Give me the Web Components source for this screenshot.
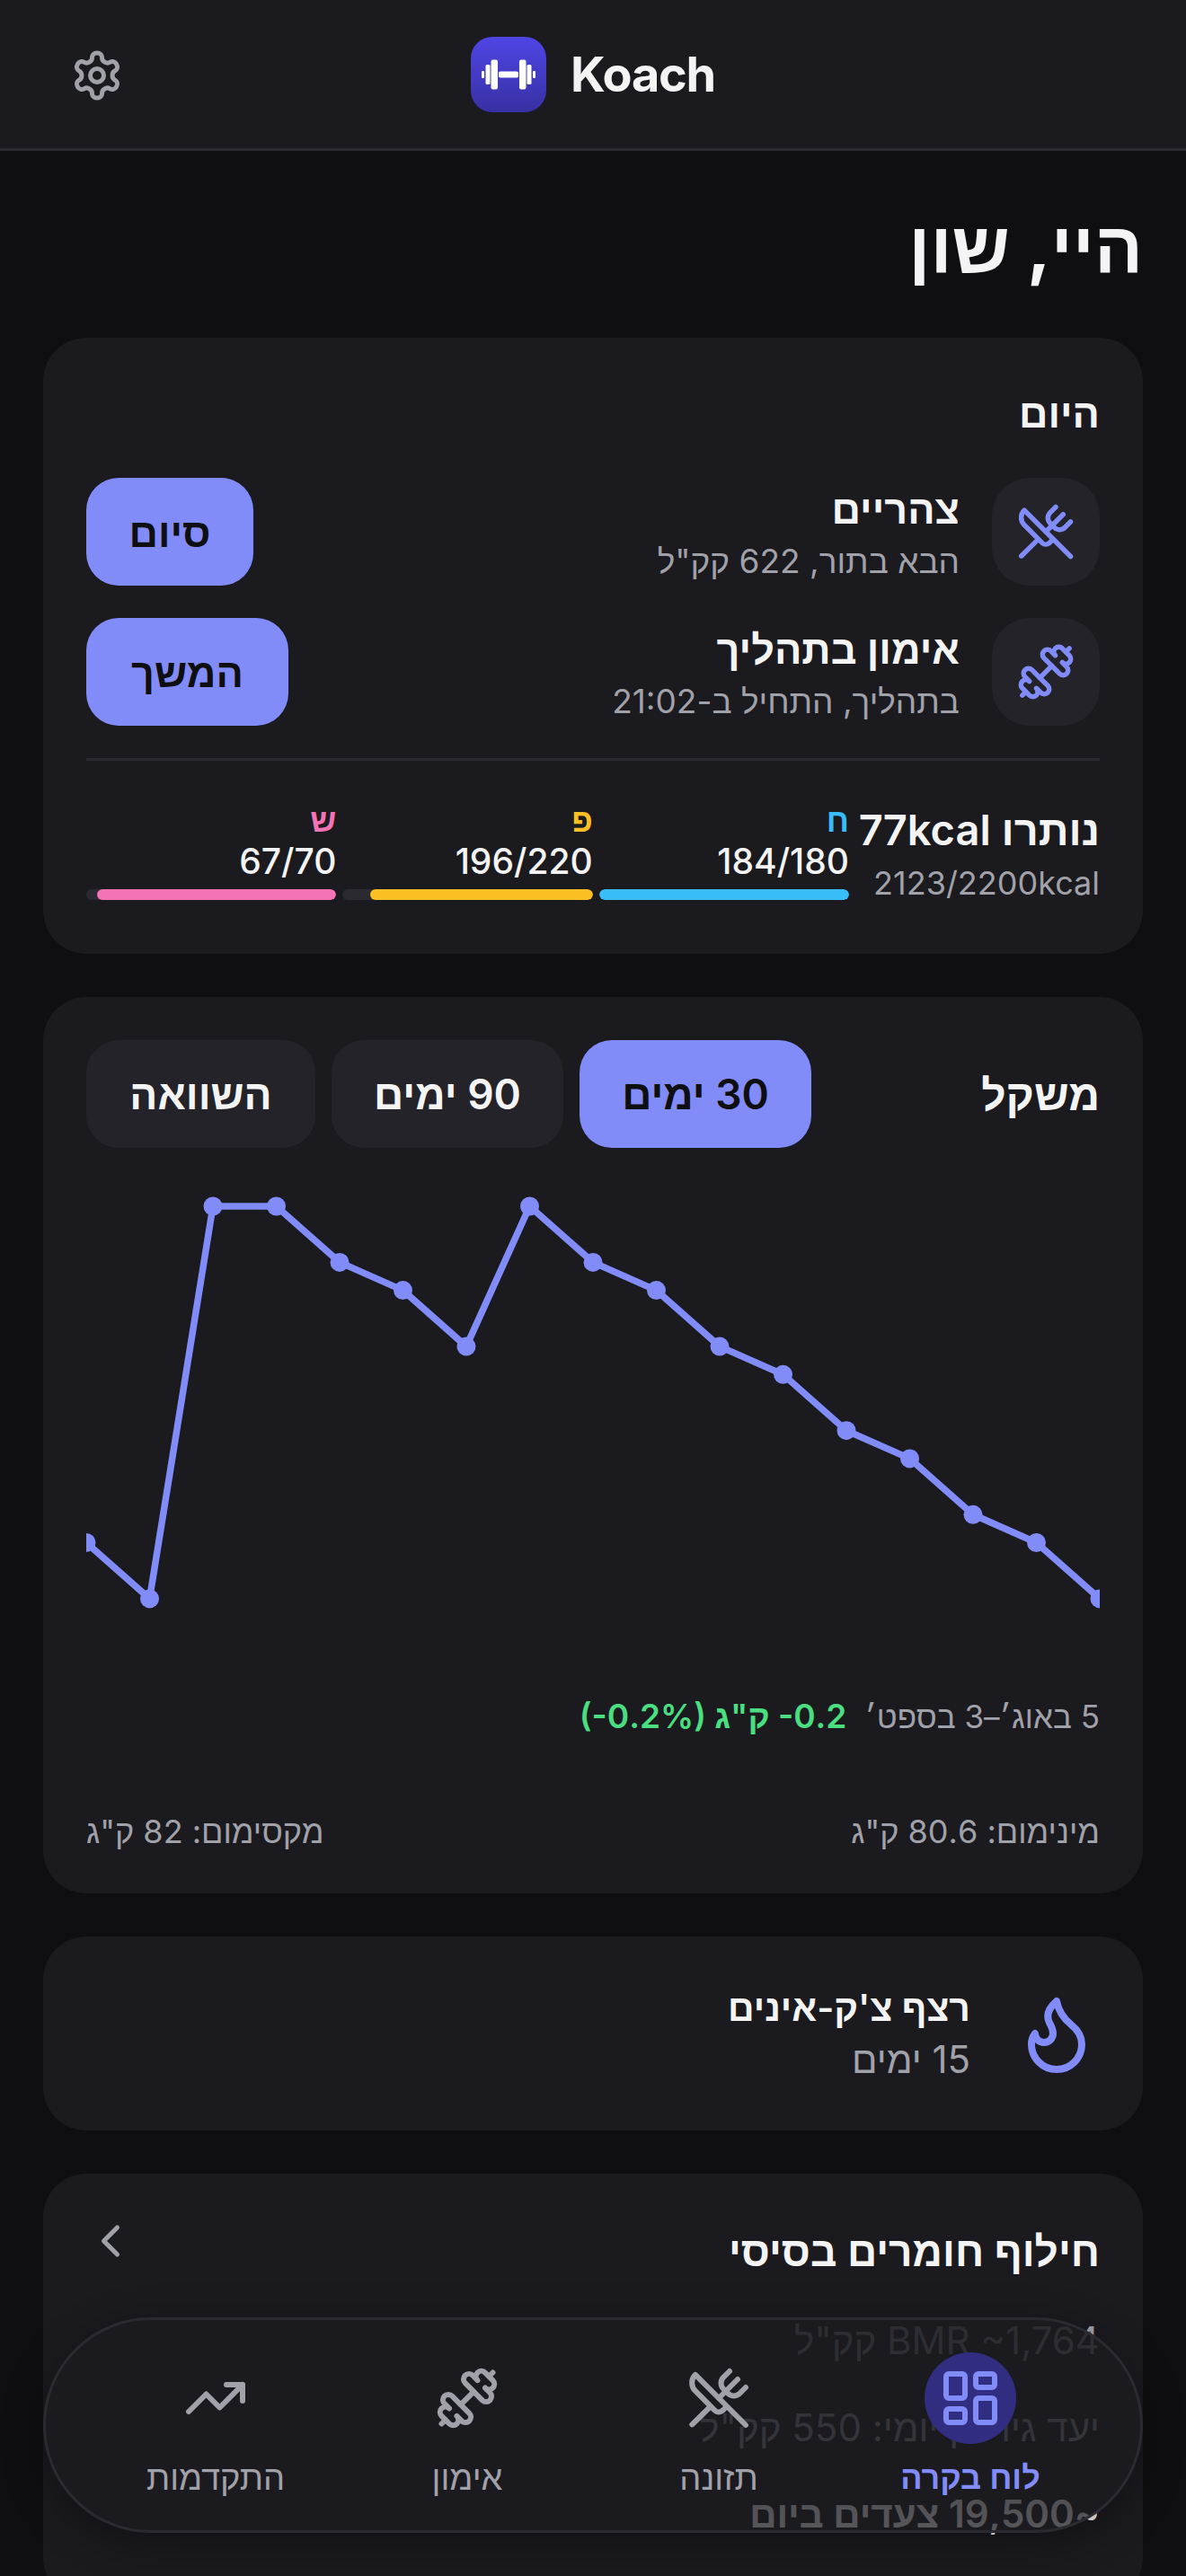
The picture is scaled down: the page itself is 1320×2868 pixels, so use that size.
<!DOCTYPE html>
<html lang="he" dir="rtl">
<head>
<meta charset="utf-8">
<title>Koach</title>
<style>
  html, body { margin: 0; background: #0f0f11; height: 2868px; overflow: hidden; }
  body { font-family: Inter, "Noto Sans", sans-serif; color: #f4f4f5; position: relative; }
</style>
</head>
<body>
<ko-header></ko-header>
<ko-main>
  <ko-title>היי, שון</ko-title>
  <ko-card style="height:686px">
    <ko-today></ko-today>
  </ko-card>
  <ko-card style="height:998px">
    <ko-weight></ko-weight>
  </ko-card>
  <ko-card style="height:216px">
    <ko-streak></ko-streak>
  </ko-card>
  <ko-card style="height:476px">
    <ko-bmr></ko-bmr>
  </ko-card>
</ko-main>
<ko-nav></ko-nav>

<script>
const ICONS = {
  gear: '<path d="M12.22 2h-.44a2 2 0 0 0-2 2v.18a2 2 0 0 1-1 1.73l-.43.25a2 2 0 0 1-2 0l-.15-.08a2 2 0 0 0-2.73.73l-.22.38a2 2 0 0 0 .73 2.73l.15.1a2 2 0 0 1 1 1.72v.51a2 2 0 0 1-1 1.74l-.15.09a2 2 0 0 0-.73 2.73l.22.38a2 2 0 0 0 2.73.73l.15-.08a2 2 0 0 1 2 0l.43.25a2 2 0 0 1 1 1.73V20a2 2 0 0 0 2 2h.44a2 2 0 0 0 2-2v-.18a2 2 0 0 1 1-1.73l.43-.25a2 2 0 0 1 2 0l.15.08a2 2 0 0 0 2.73-.73l.22-.39a2 2 0 0 0-.73-2.73l-.15-.08a2 2 0 0 1-1-1.74v-.5a2 2 0 0 1 1-1.74l.15-.09a2 2 0 0 0 .73-2.73l-.22-.38a2 2 0 0 0-2.73-.73l-.15.08a2 2 0 0 1-2 0l-.43-.25a2 2 0 0 1-1-1.73V4a2 2 0 0 0-2-2z"/><circle cx="12" cy="12" r="3"/>',
  food: '<path d="m16 2-2.3 2.3a3 3 0 0 0 0 4.2l1.8 1.8a3 3 0 0 0 4.2 0L22 8"/><path d="M15 15 3.3 3.3a4.2 4.2 0 0 0 0 6l7.3 7.3c.7.7 2 .7 2.8 0L15 15Zm0 0 7 7"/><path d="m2.1 21.8 6.4-6.3"/><path d="m19 5-7 7"/>',
  dumbbell: '<path d="M17.596 12.768a2 2 0 1 0 2.829-2.829l-1.768-1.767a2 2 0 0 0 2.828-2.829l-2.828-2.828a2 2 0 0 0-2.829 2.828l-1.767-1.768a2 2 0 1 0-2.829 2.829z"/><path d="m2.5 21.5 1.4-1.4"/><path d="m20.1 3.9 1.4-1.4"/><path d="M5.343 21.485a2 2 0 1 0 2.829-2.828l1.767 1.768a2 2 0 1 0 2.829-2.829l-6.364-6.364a2 2 0 1 0-2.829 2.829l1.768 1.767a2 2 0 0 0-2.828 2.829z"/><path d="m9.6 14.4 4.8-4.8"/>',
  trend: '<polyline points="22 7 13.5 15.5 8.5 10.5 2 17"/><polyline points="16 7 22 7 22 13"/>',
  grid: '<rect width="7" height="9" x="3" y="3" rx="1"/><rect width="7" height="5" x="14" y="3" rx="1"/><rect width="7" height="9" x="14" y="12" rx="1"/><rect width="7" height="5" x="3" y="16" rx="1"/>',
  flame: '<path d="M8.5 14.5A2.5 2.5 0 0 0 11 12c0-1.38-.5-2-1-3-1.072-2.143-.224-4.054 2-6 .5 2.5 2 4.9 4 6.5 2 1.6 3 3.5 3 5.5a7 7 0 1 1-14 0c0-1.153.433-2.294 1-3a2.5 2.5 0 0 0 2.5 2.5z"/>',
  chevron: '<path d="m15 18-6-6 6-6"/>'
};

function icon(name, size, color, sw) {
  return `<svg xmlns="http://www.w3.org/2000/svg" width="${size}" height="${size}" viewBox="0 0 24 24" fill="none" stroke="${color}" stroke-width="${sw || 2}" stroke-linecap="round" stroke-linejoin="round">${ICONS[name]}</svg>`;
}

// small helper so every element below is just a template + define
function define(tag, html) {
  customElements.define(tag, class extends HTMLElement {
    constructor() {
      super();
      this.attachShadow({ mode: 'open' }).innerHTML = html;
    }
  });
}

define('ko-header', `
  <style>
    :host { display: block; height: 165px; background: #1a1a1f; border-bottom: 3px solid #2a2a30; box-sizing: content-box; }
    .bar { height: 165px; position: relative; display: flex; align-items: center; justify-content: center; direction: ltr; gap: 27px; }
    .gear { position: absolute; left: 78px; top: 54px; line-height: 0; }
    .logo { width: 84px; height: 84px; border-radius: 24px; background: linear-gradient(180deg, #4f46e5, #3730a3); display: flex; align-items: center; justify-content: center; }
    .name { font-size: 54px; font-weight: 700; letter-spacing: -1.2px; color: #f4f4f5; }
  </style>
  <div class="bar">
    <span class="gear">${icon('gear', 60, '#a1a1aa')}</span>
    <span class="logo">
      <svg width="60" height="60" viewBox="0 0 60 60" fill="#fff">
        <rect x="0" y="26" width="3" height="8" rx="1"/>
        <rect x="4.5" y="19" width="5" height="22" rx="1.5"/>
        <rect x="10.5" y="13.5" width="7.5" height="33" rx="2"/>
        <rect x="19" y="26.5" width="22" height="7" rx="2"/>
        <rect x="42" y="13.5" width="7.5" height="33" rx="2"/>
        <rect x="50.5" y="19" width="5" height="22" rx="1.5"/>
        <rect x="57" y="26" width="3" height="8" rx="1"/>
      </svg>
    </span>
    <span class="name">Koach</span>
  </div>
`);

define('ko-main', `
  <style>
    :host { display: flex; flex-direction: column; gap: 48px; padding: 0 48px; height: 2700px; overflow: hidden; box-sizing: border-box; }
  </style>
  <slot></slot>
`);

define('ko-title', `
  <style>
    :host { display: block; flex: none; height: 160px; margin: 48px 0 -48px; font-size: 80px; font-weight: 700; line-height: 116px; text-align: right; color: #f4f4f5; }
  </style>
  <slot></slot>
`);

define('ko-card', `
  <style>
    :host { display: block; flex: none; background: #1a1a1f; border-radius: 48px; padding: 48px; box-sizing: border-box; overflow: hidden; }
  </style>
  <slot></slot>
`);

define('ko-today', `
  <style>
    :host { display: block; }
    h2 { margin: 0 0 36px; font-size: 45px; line-height: 72px; font-weight: 600; }
    .row { display: flex; align-items: center; gap: 36px; height: 120px; margin-bottom: 36px; }
    .ic { width: 120px; height: 120px; flex: none; border-radius: 42px; background: #232329; display: flex; align-items: center; justify-content: center; }
    .txt { flex: 1; padding-top: 8px; }
    .t { font-size: 45px; line-height: 58px; font-weight: 600; }
    .s { font-size: 37px; line-height: 58px; color: #a1a1aa; }
    button { height: 120px; border: 0; border-radius: 36px; padding: 0; background: #818cf8; color: #0f0f11; font: 600 45px Inter, "Noto Sans", sans-serif; }
    hr { height: 3px; margin: 0 0 48px; border: 0; background: #2a2a30; }
    .sum { display: flex; gap: 12px; align-items: flex-start; }
    .kcal { flex: 1; min-width: 0; white-space: nowrap; }
    .kcal .t { font-size: 47px; line-height: 58px; font-weight: 600; }
    .kcal .s { font-size: 36px; line-height: 60px; }
    .macros { flex: none; width: 849px; display: grid; grid-template-columns: repeat(3, 1fr); gap: 7px; }
    ko-macro { min-width: 0; }
  </style>
  <h2>היום</h2>
  <div class="row">
    <span class="ic">${icon('food', 66, '#818cf8')}</span>
    <div class="txt"><div class="t">צהריים</div><div class="s">הבא בתור, 622 קק"ל</div></div>
    <button style="width:186px">סיום</button>
  </div>
  <div class="row">
    <span class="ic">${icon('dumbbell', 66, '#818cf8')}</span>
    <div class="txt"><div class="t">אימון בתהליך</div><div class="s">בתהליך, התחיל ב-21:02</div></div>
    <button style="width:225px">המשך</button>
  </div>
  <hr>
  <div class="sum">
    <div class="kcal"><div class="t">נותרו 77kcal</div><div class="s" dir="ltr" style="text-align:right">2123/2200kcal</div></div>
    <div class="macros">
      <ko-macro letter="ח" nums="184/180" color="#38bdf8" pct="100"></ko-macro>
      <ko-macro letter="פ" nums="196/220" color="#fbbf24" pct="89"></ko-macro>
      <ko-macro letter="ש" nums="67/70" color="#f472b6" pct="95.7"></ko-macro>
    </div>
  </div>
`);

class KoMacro extends HTMLElement {
  constructor() {
    super();
    this.attachShadow({ mode: 'open' });
  }
  connectedCallback() {
    const color = this.getAttribute('color');
    this.shadowRoot.innerHTML = `
      <style>
        :host { display: block; }
        .l { font-size: 36px; line-height: 36px; font-weight: 600; color: ${color}; }
        .n { font-size: 39px; line-height: 56px; font-weight: 500; direction: ltr; text-align: right; color: #f4f4f5; }
        .track { height: 12px; border-radius: 6px; background: #2a2a30; overflow: hidden; margin-top: 3px; }
        .fill { height: 100%; border-radius: 6px; background: ${color}; width: ${this.getAttribute('pct')}%; }
      </style>
      <div class="l">${this.getAttribute('letter')}</div>
      <div class="n">${this.getAttribute('nums')}</div>
      <div class="track"><div class="fill"></div></div>`;
  }
}
customElements.define('ko-macro', KoMacro);

// weights over the 30 days, x evenly spaced over the 1128 wide plot
const WEIGHTS = [80.8, 80.6, 82, 82, 81.8, 81.7, 81.5, 82, 81.8, 81.7, 81.5, 81.4, 81.2, 81.1, 80.9, 80.8, 80.6];
const chartPts = WEIGHTS.map((v, i) => [i * 70.5, +(42 + (82 - v) * 312.1).toFixed(1)]);

define('ko-weight', `
  <style>
    :host { display: block; }
    .head { display: flex; align-items: center; height: 120px; gap: 18px; }
    h2 { flex: 1; margin: 0; font-size: 48px; font-weight: 600; }
    .tab { height: 120px; width: 258px; border-radius: 36px; background: #232329; display: flex; align-items: center; justify-content: center; font-size: 46px; font-weight: 600; }
    .tab:last-child { width: 255px; }
    .tab.on { background: #818cf8; color: #0f0f11; }
    svg { display: block; margin-top: 23px; }
    .range { display: flex; gap: 20px; margin-top: 54px; font-size: 35px; line-height: 52px; color: #a1a1aa; }
    .range b { font-size: 37px; font-weight: 600; color: #4ade80; }
    .minmax { display: flex; justify-content: space-between; margin-top: 76px; font-size: 36px; line-height: 52px; color: #a1a1aa; }
  </style>
  <div class="head">
    <h2>משקל</h2>
    <div class="tab on">30 ימים</div>
    <div class="tab">90 ימים</div>
    <div class="tab">השוואה</div>
  </div>
  <svg width="1128" height="530" viewBox="0 0 1128 530">
    <polyline fill="none" stroke="#818cf8" stroke-width="7.5" stroke-linejoin="round" points="${chartPts.map(p => p.join(',')).join(' ')}"/>
    ${chartPts.map(p => `<circle cx="${p[0]}" cy="${p[1]}" r="10.5" fill="#818cf8"/>`).join('')}
  </svg>
  <div class="range"><span>5 באוג׳–3 בספט׳</span><b><span dir="ltr">-0.2</span> ק"ג <span dir="ltr">(-0.2%)</span></b></div>
  <div class="minmax"><span>מינימום: 80.6 ק"ג</span><span>מקסימום: 82 ק"ג</span></div>
`);

define('ko-streak', `
  <style>
    :host { display: flex; align-items: center; gap: 48px; height: 120px; }
    .f { width: 96px; height: 96px; line-height: 0; }
    .t { font-size: 41px; line-height: 58px; font-weight: 600; }
    .s { font-size: 42px; line-height: 58px; color: #a1a1aa; }
  </style>
  <span class="f">${icon('flame', 96, '#818cf8')}</span>
  <div><div class="t">רצף צ'ק-אינים</div><div class="s">15 ימים</div></div>
`);

define('ko-bmr', `
  <style>
    :host { display: block; }
    .head { display: flex; justify-content: space-between; align-items: flex-start; }
    h2 { margin: 0; font-size: 46px; line-height: 76px; font-weight: 600; }
    .ch { line-height: 0; margin: -3px 0 0 -3px; }
    .rows { margin-top: 14px; font-size: 42px; line-height: 96.5px; }
    .d { color: #a1a1aa; }
    .b { font-weight: 600; color: #f4f4f5; }
  </style>
  <div class="head"><h2>חילוף חומרים בסיסי</h2><span class="ch">${icon('chevron', 60, '#a1a1aa')}</span></div>
  <div class="rows">
    <div class="d">BMR ~1,764 קק"ל</div>
    <div class="d">יעד גירעון יומי: 550 קק"ל</div>
    <div class="b">~19,500 צעדים ביום</div>
  </div>
`);

class KoNavItem extends HTMLElement {
  constructor() {
    super();
    this.attachShadow({ mode: 'open' });
  }
  connectedCallback() {
    const on = this.hasAttribute('active');
    this.shadowRoot.innerHTML = `
      <style>
        :host { display: flex; flex-direction: column; align-items: center; }
        .i { width: 102px; height: 102px; border-radius: 50%; display: flex; align-items: center; justify-content: center; ${on ? 'background:#312e81;' : ''} }
        .l { margin-top: 12px; font-size: ${on ? 36 : 38}px; line-height: 50px; color: ${on ? '#818cf8' : '#a1a1aa'}; ${on ? 'font-weight:600;' : ''} }
      </style>
      <span class="i">${icon(this.getAttribute('icon'), 72, on ? '#818cf8' : '#a1a1aa')}</span>
      <span class="l">${this.getAttribute('label')}</span>`;
  }
}
customElements.define('ko-nav-item', KoNavItem);

define('ko-nav', `
  <style>
    :host { position: absolute; left: 48px; right: 48px; top: 2580px; height: 240px; box-sizing: border-box; border: 3px solid #2a2a30; border-radius: 120px; background: linear-gradient(180deg, rgba(26,26,31,.87), rgba(26,26,31,.815) 50%, rgba(26,26,31,.72)); box-shadow: 0 12px 48px rgba(0,0,0,.3); display: grid; grid-template-columns: repeat(4, 280px); justify-content: center; padding-top: 36px; }
  </style>
  <ko-nav-item icon="grid" label="לוח בקרה" active></ko-nav-item>
  <ko-nav-item icon="food" label="תזונה"></ko-nav-item>
  <ko-nav-item icon="dumbbell" label="אימון"></ko-nav-item>
  <ko-nav-item icon="trend" label="התקדמות"></ko-nav-item>
`);
</script>
</body>
</html>
